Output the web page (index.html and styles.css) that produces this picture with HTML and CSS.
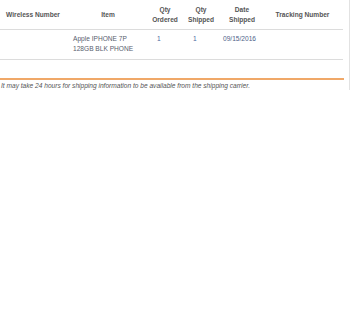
FILE: index.html
```html
<!DOCTYPE html>
<html>
<head>
<meta charset="utf-8">
<link rel="stylesheet" href="styles.css">
</head>
<body>
<div class="frame">
  <div class="table">
    <div class="row head">
      <div class="c c1">Wireless Number</div>
      <div class="c c2">Item</div>
      <div class="c c3">Qty<br>Ordered</div>
      <div class="c c4">Qty<br>Shipped</div>
      <div class="c c5">Date<br>Shipped</div>
      <div class="c c6">Tracking Number</div>
    </div>
    <div class="row body">
      <div class="c c1"></div>
      <div class="c c2 d-item">Apple IPHONE 7P<br>128GB BLK PHONE</div>
      <div class="c c3 d-ord">1</div>
      <div class="c c4 d-shp">1</div>
      <div class="c c5 d-date">09/15/2016</div>
      <div class="c c6"></div>
    </div>
  </div>
  <div class="note">It may take 24 hours for shipping information to be available from the shipping carrier.</div>
</div>
</body>
</html>
```
FILE: styles.css
```css
html, body {
  margin: 0;
  padding: 0;
  background: #fff;
}
body {
  font-family: "Liberation Sans", Arial, sans-serif;
  font-size: 6.6px;
  color: #555;
}
.frame {
  width: 349px;
  height: 90px;
  border-right: 1px solid #e2e2e2;
}
.table {
  width: 343px;
}
.row {
  display: grid;
  grid-template-columns: 66px 84px 30px 42px 40px 81px;
}
.head {
  height: 29px;
  border-bottom: 1px solid #dcdcdc;
  align-items: center;
  font-weight: bold;
  color: #555;
}
.head .c {
  text-align: center;
  line-height: 9.5px;
}
.body {
  border-bottom: 1px solid #dcdcdc;
  align-items: start;
  color: #58606e;
  line-height: 10px;
  padding-top: 4px;
  box-sizing: border-box;
  height: 30px;
}
.d-item { padding-left: 7px; }
.d-ord { padding-left: 7px; color: #4a6aa0; }
.d-shp { padding-left: 13px; color: #4a6aa0; }
.d-date { padding-left: 1px; color: #4e6288; }
.note {
  margin-top: 18px;
  border-top: 2px solid #f0a868;
  width: 343px;
  padding-top: 2px;
  font-style: italic;
  color: #555;
  padding-left: 1px;
}
```
